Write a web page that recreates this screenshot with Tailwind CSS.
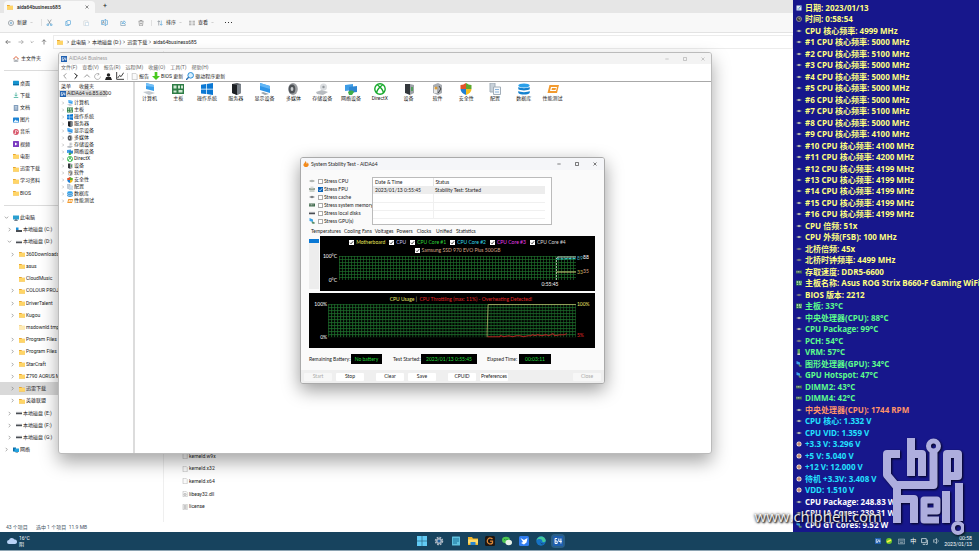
<!DOCTYPE html>
<html lang="zh-CN">
<head>
    <meta charset="UTF-8">
    <meta name="viewport" content="width=device-width, initial-scale=1.0">
    <title>AIDA64 Business</title>
    <script src="https://cdn.jsdelivr.net/npm/@tailwindcss/browser@4"></script>
</head>
<body class="h-screen overflow-hidden bg-white font-[Roboto,'Noto_Sans_CJK_SC',sans-serif] text-[5px] leading-none text-[#222] whitespace-nowrap">
<!-- Iconos -->
<svg class="hidden">
    <symbol id="folder" viewBox="0 0 12 12"><path d="M0 2h5l1 1.500h6V11H0z" fill="#e9a72e"/><path d="M0 4h12v7H0z" fill="#ffd567"/></symbol>
    <symbol id="folderlight" viewBox="0 0 12 12"><path d="M0 2h5l1 1.500h6V11H0z" fill="#f3d592"/><path d="M0 4h12v7H0z" fill="#ffebb5"/></symbol>
    <symbol id="home" viewBox="0 0 12 12"><path d="M2.500 5v6.500h2.500V8h2v3.500h2.500V5" fill="none" stroke="#8a8f98" stroke-width="1.300"/><path d="M.5 6.500L6 1l5.500 5.500" fill="none" stroke="#e0633a" stroke-width="2"/></symbol>
    <symbol id="desk" viewBox="0 0 12 12"><rect y="1.500" width="12" height="9" rx="1" fill="#1594cf"/><path d="M0 8h12v2.500H0z" fill="#0b6da5"/></symbol>
    <symbol id="down" viewBox="0 0 12 12"><path d="M6 1v7M3 5.500l3 3 3-3M1.500 11h9" fill="none" stroke="#2aa58c" stroke-width="1.400"/></symbol>
    <symbol id="doc" viewBox="0 0 12 12"><rect x="1.500" width="9" height="12" rx="1" fill="#7f9cbb"/><path d="M3.500 3h5M3.500 5.500h5M3.500 8h5" stroke="#fff"/></symbol>
    <symbol id="pic" viewBox="0 0 12 12"><rect y="1" width="12" height="10" rx="1" fill="#1c82d4"/><path d="M1 10l4-5 3 3 1.500-1.500L11 10z" fill="#e6f4ff"/></symbol>
    <symbol id="music" viewBox="0 0 12 12"><circle cx="6" cy="6" r="5.800" fill="#d8566a"/><path d="M5 9V3l4 1v2" fill="none" stroke="#fff" stroke-width="1.300"/><circle cx="4.200" cy="8.600" r="1.300" fill="#fff"/></symbol>
    <symbol id="video" viewBox="0 0 12 12"><rect width="12" height="12" rx="1" fill="#7c3cc0"/><path d="M4 3l5 3-5 3z" fill="#fff"/></symbol>
    <symbol id="pc" viewBox="0 0 12 12"><path d="M0 1h12v8H0z" fill="#2a9fd0"/><path d="M4 9h4v1.500h2v1H2v-1h2z" fill="#456"/></symbol>
    <symbol id="drive" viewBox="0 0 12 12"><path d="M0 5h12v3.500H0z" fill="#4a4e54"/><path d="M0 4.500h12" stroke="#a9adb2"/></symbol>
    <symbol id="drivec" viewBox="0 0 12 12"><path d="M0 6h12v4H0z" fill="#4a4e54"/><path d="M0 1h5v5H0z" fill="#1e90d6"/></symbol>
    <symbol id="net" viewBox="0 0 12 12"><path d="M0 1h6v8H0z" fill="#0d6ba5"/><path d="M3 3h9v7H3z" fill="#22a3e0"/><path d="M5 11h5" stroke="#456"/></symbol>
    <symbol id="file" viewBox="0 0 12 12"><path d="M2 .5h6l2.500 2.500v8.500H2z" fill="#fafafa" stroke="#aaa"/></symbol>
    <symbol id="dll" viewBox="0 0 12 12"><path d="M2 .5h6l2.500 2.500v8.500H2z" fill="#fafafa" stroke="#aaa"/><circle cx="6" cy="7" r="2" fill="none" stroke="#777"/></symbol>
    <symbol id="txt" viewBox="0 0 12 12"><path d="M2 .5h8.500v11H2z" fill="#fafafa" stroke="#aaa"/><path d="M3.500 3h5.500M3.500 5h5.500M3.500 7h5.500M3.500 9h5.500" stroke="#999"/></symbol>
    <symbol id="chev" viewBox="0 0 12 12"><path d="M4 2l4 4-4 4" fill="none" stroke="currentColor" stroke-width="1.500"/></symbol>
    <symbol id="chevd" viewBox="0 0 12 12"><path d="M2 4l4 4 4-4" fill="none" stroke="currentColor" stroke-width="1.500"/></symbol>
    <symbol id="left" viewBox="0 0 12 12"><path d="M11 6H1.500M5.500 2l-4 4 4 4" fill="none" stroke="currentColor" stroke-width="1.400"/></symbol>
    <symbol id="x" viewBox="0 0 12 12"><path d="M1.500 1.500l9 9M10.500 1.500l-9 9" stroke="currentColor" stroke-width="1.500"/></symbol>
    <symbol id="max" viewBox="0 0 12 12"><path d="M1.500 1.500h9v9h-9z" fill="none" stroke="currentColor" stroke-width="1.500"/></symbol>
    <symbol id="min" viewBox="0 0 12 12"><path d="M1 6h10" stroke="currentColor" stroke-width="1.500"/></symbol>
    <symbol id="tick" viewBox="0 0 12 12"><path d="M2.500 6.500L5 9l5-6" fill="none" stroke="currentColor" stroke-width="1.800"/></symbol>
    <symbol id="plusc" viewBox="0 0 12 12"><circle cx="6" cy="6" r="5.200" fill="none" stroke="#59656f"/><path d="M6 3.500v5M3.500 6h5" stroke="#2a7db5"/></symbol>
    <symbol id="cut" viewBox="0 0 12 12"><path d="M3 1l5 8M9 1L4 9" stroke="#68737c" fill="none"/><circle cx="3" cy="10" r="1.500" fill="none" stroke="#2a8fd0"/><circle cx="9" cy="10" r="1.500" fill="none" stroke="#2a8fd0"/></symbol>
    <symbol id="copy" viewBox="0 0 12 12"><rect x="4" y="1" width="7" height="8" rx="1" fill="none" stroke="#2a8fd0"/><path d="M4 3H1.500v8H8V9" fill="none" stroke="#2a8fd0"/></symbol>
    <symbol id="paste" viewBox="0 0 12 12"><rect x="1.500" y="1.500" width="8" height="10" rx="1" fill="none" stroke="#c4c8cc"/><rect x="5.500" y="5" width="5" height="6.500" fill="#fff" stroke="#b5cfe2"/></symbol>
    <symbol id="rename" viewBox="0 0 12 12"><path d="M6 2.500H1v7h5M9 2.500h2v7H9M7.500 0v12M6 0h3M6 12h3" fill="none" stroke="#3d93cd"/><path d="M2.500 8l1.500-4 1.500 4" fill="none" stroke="#59656f"/></symbol>
    <symbol id="share" viewBox="0 0 12 12"><path d="M5 3H1.500v8h9V8" fill="none" stroke="#59809c"/><path d="M4 8c0-3 2-4 4-4V1.500L11.500 5 8 8V6C6 6 5 6.500 4 8z" fill="none" stroke="#2a8fd0"/></symbol>
    <symbol id="trash" viewBox="0 0 12 12"><path d="M1 2.500h10M4 2V1h4v1M2 3l1 8.500h6L10 3M5 5.500v3M7 5.500v3" fill="none" stroke="#666"/></symbol>
    <symbol id="sort" viewBox="0 0 12 12"><path d="M3.500 11V1.500M1 4l2.500-2.500L6 4" fill="none" stroke="#59656f"/><path d="M8.500 1v9.500M6 8l2.500 2.500L11 8" fill="none" stroke="#2a8fd0"/></symbol>
    <symbol id="view" viewBox="0 0 12 12"><path d="M0 2.500h5M0 6h5M0 9.500h5M7 2.500h5M7 6h5M7 9.500h5" stroke="#777" stroke-width="1.300"/></symbol>

    <symbol id="logo64" viewBox="0 0 12 12"><path d="M0 0h12v12H0z" fill="#1e5fb0"/><path d="M5 3H2.500v6H5V6H2.500M7 3v3.500h3.500M9.500 3v6" fill="none" stroke="#fff" stroke-width="1.200"/></symbol>
    <symbol id="computer" viewBox="0 0 12 12"><path d="M3 0l8 2v6L3 6z" fill="#3aa0ec"/><path d="M3 0l8 2v2L3 3z" fill="#74c0f8"/><path d="M0 9l6-1 6 2-6 2z" fill="#c3c9cf"/></symbol>
    <symbol id="board" viewBox="0 0 12 12"><path d="M0 1h12v10H0z" fill="#2e7d46"/><path d="M1.500 2.500h3v3h-3zM6 2.500h2v3H6zM9 2.500h2v3H9zM1.500 7.500h3v2h-3zM6.500 7h4v2.500h-4z" fill="#cfe8d2"/></symbol>
    <symbol id="win" viewBox="0 0 12 12"><path d="M0 1.700l5-.7v4.700H0zM5.700.9L12 0v5.700H5.700zM0 6.400h5v4.700l-5-.7zM5.700 6.400H12V12l-6.300-.9z" fill="#0a78d4"/></symbol>
    <symbol id="server" viewBox="0 0 12 12"><path d="M2 1l5-1 4 1v9l-4 2-5-2z" fill="#55595f"/><path d="M2 1l5 1v10l-5-2z" fill="#1d2024"/><path d="M7 2l4-1v9l-4 2z" fill="#7c838b"/></symbol>
    <symbol id="display" viewBox="0 0 12 12"><path d="M1 0l10 3v7L1 7z" fill="#2f95e8"/><path d="M1 0l10 3v3L1 3z" fill="#62b6f6"/><path d="M4 9l6 2-4 1-4-2z" fill="#9aa3ab"/></symbol>
    <symbol id="speaker" viewBox="0 0 12 12"><ellipse cx="6" cy="6" rx="4.800" ry="6" fill="#9a9da1"/><ellipse cx="5" cy="6" rx="3.300" ry="4.500" fill="#4f5357"/><ellipse cx="5" cy="6" rx="1.400" ry="2" fill="#c9cccf"/></symbol>
    <symbol id="storage" viewBox="0 0 12 12"><path d="M0 9l6-2 6 2-5 3-6-1z" fill="#b7bbc0"/><circle cx="7.500" cy="4" r="3.500" fill="#d9dcdf"/><circle cx="7.500" cy="4" r="1.200" fill="#93989d"/></symbol>
    <symbol id="network" viewBox="0 0 12 12"><path d="M0 2l8-1v6L0 8z" fill="#3f9de6"/><path d="M4 4l8-1v6l-8 1z" fill="#2f87d2"/><path d="M3 9c2-2 5-2 6 0L7 12H4z" fill="#3fae49"/></symbol>
    <symbol id="directx" viewBox="0 0 12 12"><circle cx="6" cy="6" r="5.200" fill="#fff" stroke="#16a82b" stroke-width="1.400"/><path d="M2.500 10C3 7 5 4.500 8.500 2M9.500 10C9 7 7 4.500 3.500 2" fill="none" stroke="#16a82b" stroke-width="1.500"/></symbol>
    <symbol id="device" viewBox="0 0 12 12"><path d="M2 1h5v11l-5-2z" fill="#34383c"/><path d="M7 1l4 1v8l-4 2z" fill="#9da2a7"/><path d="M8 4h2v4H8z" fill="#54a05e"/></symbol>
    <symbol id="software" viewBox="0 0 12 12"><path d="M2 2l5-2 4 2v8l-4 2-5-2z" fill="#a9adb2"/><path d="M3 4h3v6H3z" fill="#e8e8e8"/><path d="M8 3l2 3-3 4" fill="none" stroke="#444"/><circle cx="5" cy="5" r="1.500" fill="#d79b3c"/></symbol>
    <symbol id="shield" viewBox="0 0 12 12"><path d="M6 0v6H.5V2C3 2 4 1 6 0z" fill="#e2532a"/><path d="M6 0v6h5.500V2C9 2 8 1 6 0z" fill="#5fa92e"/><path d="M.5 6H6v6C3 11 .5 9 .5 6z" fill="#1e7fd4"/><path d="M11.500 6H6v6c3-1 5.500-3 5.500-6z" fill="#f5bd1f"/></symbol>
    <symbol id="config" viewBox="0 0 12 12"><path d="M1 0h5v9H1z" fill="#c9d2da" stroke="#a3aeb9"/><path d="M4.500 4h7v7.500h-7z" fill="#f5f8fb" stroke="#a3aeb9"/><path d="M6 6.500h4M6 9h4" stroke="#8ab4dc"/></symbol>
    <symbol id="database" viewBox="0 0 12 12"><ellipse cx="6" cy="2.500" rx="5.700" ry="2" fill="#2ba0ea"/><path d="M.3 4c2 1.500 9.400 1.500 11.400 0v2.300C9.700 7.800 2.300 7.800.3 6.300zM.3 8c2 1.500 9.400 1.500 11.400 0v2c-2 2-9.400 2-11.400 0z" fill="#1481cf"/></symbol>
    <symbol id="bench" viewBox="0 0 12 12"><path d="M2.500 2H12l-2 8H.5z" fill="#f29a2e"/><path d="M4 4h6L9 8H3z" fill="#fff"/><path d="M5 5h4l-.5 2h-4z" fill="#f29a2e"/></symbol>

    <symbol id="person" viewBox="0 0 12 12"><circle cx="6" cy="3.500" r="3" fill="#222"/><path d="M0 12l2-5h8l2 5z" fill="#222"/></symbol>
    <symbol id="chart" viewBox="0 0 12 12"><path d="M1 0v11h11" fill="none" stroke="#222" stroke-width="1.300"/><path d="M2.500 9l3-4 2 2 4-6" fill="none" stroke="#222" stroke-width="1.300"/></symbol>
    <symbol id="refresh" viewBox="0 0 12 12"><path d="M8 1.500A5 5 0 1 0 11 6M6 0l3 2-3 2" fill="none" stroke="#999" stroke-width="1.200"/></symbol>
    <symbol id="green" viewBox="0 0 12 12"><path d="M4 0h4v6h4l-6 6-6-6h4z" fill="#48c81e"/></symbol>
    <symbol id="mag" viewBox="0 0 12 12"><circle cx="7" cy="5" r="4.200" fill="#d8effd" stroke="#2a8fd8" stroke-width="1.500"/><path d="M4 8l-4 4" stroke="#2a6fb0" stroke-width="2"/></symbol>
    <symbol id="flame" viewBox="0 0 12 12"><path d="M5 0c3 3 1 4 3 6 1-1 0-2 1-3 2 2 3 4 2 6-2 4-8 4-10 0C0 6 4 4 5 0z" fill="#f28a1c"/></symbol>
    <symbol id="chip" viewBox="0 0 12 12"><path d="M0 6l6-2.500L12 6 6 8.500z" fill="#8c9488"/><path d="M3 6l3-1 3 1-3 1z" fill="#eef"/></symbol>
    <symbol id="pch" viewBox="0 0 12 12"><path d="M0 6l6-2.500L12 6 6 8.500z" fill="#777c80"/></symbol>
    <symbol id="fpu" viewBox="0 0 12 12"><path d="M0 4h12v4H0zM1 9h10v2H1z" fill="#9aa79a"/><path d="M3 1h6v4H3z" fill="#d7dcd7"/></symbol>
    <symbol id="ram" viewBox="0 0 12 12"><path d="M0 3h12v6H0z" fill="#3f6b4c"/><path d="M1 4h2v3H1zM4 4h2v3H4zM7 4h2v3H7z" fill="#9cab9f"/></symbol>
    <symbol id="gpu" viewBox="0 0 12 12"><path d="M1 0l7 3v5L1 6z" fill="#39a2e8"/><path d="M5 7l6 1v4l-5-1z" fill="#5c8f68"/></symbol>
    <symbol id="vrm" viewBox="0 0 12 12"><path d="M3 0h5v12H3z" fill="#5da55f"/><path d="M3 9h5v3H3z" fill="#ccc"/></symbol>
    <symbol id="volt" viewBox="0 0 12 12"><circle cx="6" cy="6" r="5" fill="#f0e3d8"/><path d="M6 2v8M2 6h8" stroke="#a4523a" stroke-width="1.500"/></symbol>
    <symbol id="clock" viewBox="0 0 12 12"><circle cx="6" cy="6" r="5" fill="#333" stroke="#a7a7a7" stroke-width="1.500"/><path d="M6 3v3h3" stroke="#fff" fill="none"/></symbol>
    <symbol id="cal" viewBox="0 0 12 12"><path d="M1 1h10v10H1z" fill="#dfe9f3"/><path d="M6 6l5-4M3 8h4" stroke="#2878bd" stroke-width="1.500"/></symbol>
</svg>

<div class="relative flex h-full flex-col">
    <div class="flex min-h-0 flex-1">
        <!-- Explorador de archivos -->
        <section class="flex min-w-0 flex-1 flex-col overflow-hidden bg-white">
            <header class="flex h-[13px] items-end bg-[#e6e6e6] px-1">
                <div class="flex h-3 w-[91px] items-center gap-1 rounded-t-sm bg-[#f8f8f8] px-[3px] font-medium">
                    <svg class="size-[6px]"><use href="#folder"/></svg>
                    <span class="flex-1">aida64business685</span>
                    <button class="mr-[3px]" aria-label="关闭标签"><svg class="size-1"><use href="#x"/></svg></button>
                </div>
                <button class="ml-2 pb-[3px] text-[7px]">+</button>
            </header>
            <div class="flex h-5 items-center border-b border-[#e3e3e3] bg-[#f8f8f8] pl-2">
                <button class="flex w-[33px] items-center gap-[3px]"><svg class="size-[6px]"><use href="#plusc"/></svg>新建<svg class="size-[3px] text-[#888]"><use href="#chevd"/></svg></button>
                <div class="flex w-[110px] items-center gap-3 border-l border-[#e0e0e0] pl-1">
                    <button aria-label="剪切"><svg class="size-[7px]"><use href="#cut"/></svg></button>
                    <button aria-label="复制"><svg class="size-[6px]"><use href="#copy"/></svg></button>
                    <button aria-label="粘贴"><svg class="size-[6px]"><use href="#paste"/></svg></button>
                    <button aria-label="重命名"><svg class="size-[7px]"><use href="#rename"/></svg></button>
                    <button aria-label="共享"><svg class="size-[6px]"><use href="#share"/></svg></button>
                    <button aria-label="删除"><svg class="size-[6px]"><use href="#trash"/></svg></button>
                </div>
                <button class="flex w-[34px] items-center gap-[3px] border-l border-[#e0e0e0] pl-[5px]"><svg class="size-[6px]"><use href="#sort"/></svg>排序<svg class="size-[3px] text-[#888]"><use href="#chevd"/></svg></button>
                <button class="flex w-10 items-center gap-[3px] pl-1"><svg class="size-[6px]"><use href="#view"/></svg>查看<svg class="size-[3px] text-[#888]"><use href="#chevd"/></svg></button>
                <button class="flex gap-[2px]" aria-label="更多"><i class="size-px bg-[#333]"></i><i class="size-px bg-[#333]"></i><i class="size-px bg-[#333]"></i></button>
            </div>
            <div class="flex h-[18px] items-center">
                <div class="flex w-[53px] items-center justify-between pr-[6px] pl-[5px] text-[#555]">
                    <button aria-label="后退"><svg class="size-[6px]"><use href="#left"/></svg></button>
                    <button aria-label="前进"><svg class="size-[6px] rotate-180 opacity-60"><use href="#left"/></svg></button>
                    <button aria-label="最近"><svg class="size-1"><use href="#chevd"/></svg></button>
                    <button aria-label="向上"><svg class="size-[6px] rotate-90"><use href="#left"/></svg></button>
                </div>
                <nav class="flex h-[14px] flex-1 items-center gap-px border border-[#ececec] pl-[3px]">
                    <svg class="mr-[2px] size-[6px]"><use href="#folder"/></svg>
                    <svg class="size-1"><use href="#chev"/></svg><a href="#">此电脑</a>
                    <svg class="size-1"><use href="#chev"/></svg><a href="#">本地磁盘 (D:)</a>
                    <svg class="size-1"><use href="#chev"/></svg><a href="#">迅雷下载</a>
                    <svg class="size-1"><use href="#chev"/></svg><a href="#">aida64business685</a>
                </nav>
            </div>
            <div class="flex min-h-0 flex-1">
                <nav class="flex w-[164px] flex-col border-r border-[#efefef]">
                    <a href="#" class="mx-1 flex h-5 items-center gap-[2px] border-b border-[#dcdcdc] pb-1 pl-[9px]"><svg class="size-[6px]"><use href="#home"/></svg>主文件夹</a>
                    <div id="nav" class="mt-[6px] mb-[66px] flex flex-1 flex-col"></div>
                </nav>
                <div class="flex flex-1 flex-col justify-end pb-[9px] pl-[18px]">
                    <ul id="files" class="flex h-[63px] flex-col"></ul>
                </div>
            </div>
            <footer class="flex h-[10px] items-center gap-2 pl-[6px] text-[#456]"><span>43 个项目</span><span>选中 1 个项目&nbsp; 11.9 MB</span></footer>
        </section>

        <!-- Panel de sensores -->
        <aside id="sensors" class="flex w-[186px] flex-col overflow-hidden bg-[#17178c] pt-[2px] pb-[2px] pl-[3px] font-['Open_Sans','Noto_Sans_CJK_SC',sans-serif] text-[8px] font-bold"></aside>
    </div>

    <!-- Barra de tareas -->
    <footer class="grid h-[19px] grid-cols-[1fr_auto_1fr] items-center border-b border-[#8ea5b3] bg-[#17435e] text-white">
        <div class="flex items-center gap-[2px] pl-[7px]">
            <svg class="h-2 w-[10px]" viewBox="0 0 20 16"><path d="M4 14a4 4 0 0 1 0-8 6 6 0 0 1 11-1 4.500 4.500 0 0 1 1 9z" fill="#b9d3f7"/></svg>
            <div class="flex flex-col gap-px"><span>16°C</span><span>阴</span></div>
        </div>
        <div class="flex items-center gap-[3px]">
            <button class="p-[2px]" aria-label="开始"><svg class="size-[10px]" viewBox="0 0 20 20"><path d="M0 0h9.500v9.500H0zM10.500 0H20v9.500h-9.500zM0 10.500h9.500V20H0zM10.500 10.500H20V20h-9.500z" fill="#62cbf5"/></svg></button>
            <button class="p-[2px]" aria-label="设置"><svg class="size-[10px]" viewBox="0 0 20 20"><circle cx="10" cy="10" r="7" fill="none" stroke="#b4bec8" stroke-width="3" stroke-dasharray="3.500 2"/><circle cx="10" cy="10" r="6" fill="#a5b1bd"/><circle cx="10" cy="10" r="3" fill="#205f9c"/></svg></button>
            <button class="p-[2px]" aria-label="记事本"><svg class="size-[10px]" viewBox="0 0 20 20"><rect x="2" y="1" width="16" height="18" rx="1" fill="#5fc0dd"/><path d="M4 6h12M4 10h12M4 14h8" stroke="#17719a" stroke-width="2"/></svg></button>
            <button class="p-[2px]" aria-label="文件资源管理器"><svg class="size-[10px]" viewBox="0 0 20 20"><path d="M0 2h8l2 3h10v13H0z" fill="#f0b429"/><path d="M0 7h20v8H0z" fill="#ffdc6b"/><path d="M5 12h10v6H5z" fill="#2a86d2"/></svg></button>
            <button class="p-[2px]" aria-label="技嘉"><svg class="size-[10px]" viewBox="0 0 20 20"><rect width="20" height="20" rx="3" fill="#1c1714"/><path d="M15 6a6 6 0 1 0 0 8v-4h-5" fill="none" stroke="#e18a37" stroke-width="2.500"/></svg></button>
            <button class="p-[2px]" aria-label="微信"><svg class="size-[10px]" viewBox="0 0 20 20"><ellipse cx="8" cy="8" rx="8" ry="6.500" fill="#4cc552"/><ellipse cx="13.500" cy="13" rx="6.500" ry="5.500" fill="#e8f2ea"/><circle cx="5.500" cy="7" r="1.200" fill="#173"/><circle cx="10" cy="7" r="1.200" fill="#173"/></svg></button>
            <button class="p-[2px]" aria-label="迅雷"><svg class="size-[10px]" viewBox="0 0 20 20"><rect width="20" height="20" rx="3" fill="#2f7df0"/><path d="M3 4l7 4 7-4-2 9-5 4-6-3 4-2z" fill="#fff"/></svg></button>
            <button class="p-[2px]" aria-label="Edge"><svg class="size-[10px]" viewBox="0 0 20 20"><circle cx="10" cy="10" r="9.500" fill="#1673c5"/><path d="M1 9C3-2 18-2 19.500 9c0 4-6 4-7 2 1-5-7-7-11.500-2z" fill="#43c99b"/><path d="M9 11c0 4 4 5 8 4-2 3-9 2-8-4z" fill="#17435e"/></svg></button>
            <button class="rounded-sm bg-[#2a5f86] p-[2px]" aria-label="AIDA64"><svg class="size-[10px]"><use href="#logo64"/></svg></button>
        </div>
        <div class="flex items-center justify-end gap-[5px] pr-[7px]">
            <svg class="size-[6px]"><use href="#logo64"/></svg>
            <svg class="size-[6px]" viewBox="0 0 12 12"><circle cx="6" cy="6" r="6" fill="#6cc52c"/><path d="M2 8l8-4" stroke="#fff04a" stroke-width="3"/></svg>
            <svg class="ml-px size-[7px]" viewBox="0 0 12 12"><path d="M.5 2h11v8H.5zM2 5h8M3 8h6" fill="none" stroke="#d0dae0"/></svg>
            <span class="text-[6px]">中</span>
            <svg class="size-[7px]" viewBox="0 0 12 12"><path d="M1 1h8v7H1zM3 11h4M11 3v8H8" fill="none" stroke="#e0e8ec" stroke-width="1.300"/></svg>
            <svg class="size-[6px]" viewBox="0 0 12 12"><path d="M0 4h3l4-3v10L3 8H0z" fill="none" stroke="#e0e8ec" stroke-width="1.300"/><path d="M9 3c2 2 2 4 0 6" fill="none" stroke="#e0e8ec"/></svg>
            <div class="flex flex-col items-end gap-px font-[Lato,sans-serif]"><span>00:58</span><span>2023/01/13</span></div>
        </div>
    </footer>

    <!-- Ventana AIDA64 -->
    <section class="absolute top-[52px] left-[58px] flex h-[402px] w-[654px] flex-col overflow-hidden rounded-[3px] border border-[#bbb] bg-white shadow-[0_8px_18px_rgba(0,0,0,0.35)]">
        <header class="flex h-[11px] items-center bg-[#f3f3f3] px-[2px] text-[#999]">
            <svg class="mr-[2px] size-[6px]"><use href="#logo64"/></svg>
            <h1 class="flex-1 font-[Lato,sans-serif]">AIDA64 Business</h1>
            <div class="flex gap-[14px] pr-1">
                <button aria-label="最小化"><svg class="size-1"><use href="#min"/></svg></button>
                <button aria-label="最大化"><svg class="size-1"><use href="#max"/></svg></button>
                <button aria-label="关闭"><svg class="size-1"><use href="#x"/></svg></button>
            </div>
        </header>
        <nav class="flex h-[7px] items-center gap-[5px] pl-[2px] text-[#666]">
            <button>文件(F)</button><button>查看(V)</button><button>报告(R)</button><button>远程(M)</button><button>收藏(O)</button><button>工具(T)</button><button>帮助(H)</button>
        </nav>
        <div class="flex h-[11px] items-center gap-[3px] border-b border-[#a8a8a8] pl-[2px]">
            <button aria-label="后退"><svg class="size-2 rotate-180 text-[#999]"><use href="#chev"/></svg></button>
            <button aria-label="前进"><svg class="size-2 text-black"><use href="#chev"/></svg></button>
            <button aria-label="向上"><svg class="size-2 rotate-180 text-[#999]"><use href="#chevd"/></svg></button>
            <button aria-label="刷新"><svg class="size-[7px]"><use href="#refresh"/></svg></button>
            <button class="ml-px" aria-label="用户"><svg class="size-[7px]"><use href="#person"/></svg></button>
            <button class="ml-px" aria-label="图表"><svg class="size-2"><use href="#chart"/></svg></button>
            <button class="flex items-center gap-px border-l border-[#ddd] pl-[3px]"><svg class="size-[7px]"><use href="#file"/></svg>报告</button>
            <button class="flex items-center gap-px"><svg class="size-2"><use href="#green"/></svg>BIOS 更新</button>
            <button class="flex items-center gap-px"><svg class="size-2"><use href="#mag"/></svg>驱动程序更新</button>
        </div>
        <div class="flex min-h-0 flex-1">
            <div class="w-[76px] border-r-2 border-[#dcdcdc]">
                <div class="flex h-2 items-center gap-2 pl-[2px] text-[#222]"><span>菜单</span><span>收藏夹</span></div>
                <div class="mb-[2px] flex h-[7px] w-[48px] items-center gap-px bg-[#d9d9d9] pl-px font-[Lato,sans-serif]"><svg class="size-[6px] shrink-0"><use href="#logo64"/></svg>AIDA64 v6.85.6300</div>
                <ul id="tree"></ul>
            </div>
            <div class="min-w-0 flex-1">
                <div id="tools" class="grid w-[432px] grid-cols-15 pt-px"></div>
            </div>
        </div>
    </section>

    <!-- System Stability Test -->
    <section class="absolute top-[157px] left-[300px] flex w-[305px] flex-col overflow-hidden rounded-[3px] border border-[#aaa] bg-[#fafafa] font-[Lato,sans-serif] text-[#222] shadow-[0_6px_18px_rgba(0,0,0,0.4)]">
        <header class="flex h-3 items-center bg-[#f5f6f9] px-[2px]">
            <svg class="mr-[2px] size-[6px]"><use href="#flame"/></svg>
            <h2 class="flex-1">System Stability Test - AIDA64</h2>
            <div class="flex gap-[14px] pr-[5px] text-black">
                <button aria-label="最小化"><svg class="size-1"><use href="#min"/></svg></button>
                <button aria-label="最大化"><svg class="size-1"><use href="#max"/></svg></button>
                <button aria-label="关闭"><svg class="size-1"><use href="#x"/></svg></button>
            </div>
        </header>
        <div class="flex flex-col pt-[7px] pr-[9px] pl-2">
            <div class="flex">
                <div id="stress" class="w-[63px] shrink-0"></div>
                <div class="h-[48px] w-[180px] border border-[#bbb] bg-white">
                    <table class="w-[172px] table-fixed text-left">
                        <thead><tr class="h-2"><th class="w-[60px] border-r border-[#e5e5e5] pl-[2px] font-normal">Date &amp; Time</th><th class="pl-[2px] font-normal">Status</th></tr></thead>
                        <tbody>
                            <tr class="h-2 bg-[#ededed]"><td class="pl-[2px]">2023/01/13 0:55:45</td><td class="pl-[2px]">Stability Test: Started</td></tr>
                            <tr class="h-2 border-b border-[#f0f0f0]"><td class="border-r border-[#f0f0f0]"></td><td></td></tr>
                            <tr class="h-2 border-b border-[#f0f0f0]"><td class="border-r border-[#f0f0f0]"></td><td></td></tr>
                            <tr class="h-2 border-b border-[#f0f0f0]"><td class="border-r border-[#f0f0f0]"></td><td></td></tr>
                        </tbody>
                    </table>
                </div>
            </div>
            <nav class="mt-[2px] mb-px flex h-2 items-center gap-[3px] pl-[2px]">
                <button>Temperatures</button><button>Cooling Fans</button><button>Voltages</button><button>Powers</button><button class="ml-px">Clocks</button><button class="ml-[2px]">Unified</button><button class="ml-px">Statistics</button>
            </nav>
            <div class="flex">
                <div class="mt-[3px] mb-[2px] w-[10px] bg-[#ededed]"><div class="h-1 bg-[#0a78d4]"></div></div>
                <div class="ml-px min-w-0 flex-1 bg-black pt-[3px]">
                    <div class="flex h-[6px] items-center justify-center gap-1" id="legend"></div>
                    <div class="mt-[2px] flex h-[6px] items-center justify-center" id="legend2"></div>
                    <svg class="block w-full" viewBox="0 0 275 38" font-size="5">
                        <defs><pattern id="g1" width="3" height="3" patternUnits="userSpaceOnUse" x="19" y="3"><path d="M.5 0v3M0 .5h3" stroke="#1c6b2a" stroke-width=".7"/></pattern></defs>
                        <rect x="19" y="3" width="237" height="24" fill="url(#g1)"/>
                        <path d="M236.500 27V5" stroke="#cfe0c8" stroke-dasharray="2 1" stroke-width=".8"/>
                        <path d="M236.500 6l1-2 18.500 0" fill="none" stroke="#e0e6e6" stroke-width=".8"/>
                        <path d="M236.500 6l19.500-.5" fill="none" stroke="#35c8c8" stroke-width="1.200" stroke-dasharray="3 1"/>
                        <path d="M236.500 19H256" stroke="#cfc878" stroke-width="1"/>
                        <text x="17" y="5" text-anchor="end" fill="#fff">100°C</text>
                        <text x="17" y="29" text-anchor="end" fill="#fff">0°C</text>
                        <text x="257" y="7" fill="#4aa8b8">89</text><text x="263" y="6" fill="#fff">88</text>
                        <text x="257" y="21" fill="#c8b858">33</text><text x="263" y="20" fill="#d9a88a">35</text>
                        <text x="230" y="33" text-anchor="middle" fill="#fff">0:55:45</text>
                    </svg>
                </div>
            </div>
            <div class="mt-[2px] bg-black">
                <svg class="block w-full" viewBox="0 0 285 55" font-size="5">
                    <defs><pattern id="g2" width="3" height="3" patternUnits="userSpaceOnUse" x="19" y="11"><path d="M.5 0v3M0 .5h3" stroke="#1c6b2a" stroke-width=".7"/></pattern></defs>
                    <text x="105" y="8" text-anchor="end" fill="#e8e86a">CPU Usage</text>
                    <text x="107" y="8" text-anchor="middle" fill="#ccc">|</text>
                    <text x="110" y="8" fill="#e02828">CPU Throttling (max: 11%) - Overheating Detected!</text>
                    <rect x="19" y="11" width="247" height="33" fill="url(#g2)"/>
                    <path d="M177.500 44v-5l1-27.500H266" fill="none" stroke="#b5b56a" stroke-width=".8"/>
                    <path d="M178 43.500h12l1-1 3 1 5-1 4 1 4-1 3 0 4 1 4-1 3 0 2-1 2 1 3-1 4 1 4-1 3 1 4-2 2 2 5-1 4 0 3-1" fill="none" stroke="#b02222" stroke-width="1"/>
                    <text x="18" y="13" text-anchor="end" fill="#fff">100%</text>
                    <text x="18" y="46" text-anchor="end" fill="#fff">0%</text>
                    <text x="267" y="13" fill="#e8e86a">100%</text>
                    <text x="267" y="44" fill="#e02828">5%</text>
                </svg>
            </div>
            <div class="my-[6px] flex h-[10px] items-center">
                <span class="w-[42px]">Remaining Battery:</span><output class="flex h-full w-[31px] items-center justify-center bg-black text-[#22d83c]">No battery</output>
                <span class="ml-[11px] w-[28px]">Test Started:</span><output class="flex h-full w-[56px] items-center justify-center bg-black text-[#22d83c]">2023/01/13 0:55:45</output>
                <span class="ml-[10px] w-8">Elapsed Time:</span><output class="flex h-full w-8 items-center justify-center bg-black text-[#22d83c]">00:03:11</output>
            </div>
        </div>
        <footer class="flex h-[13px] items-center gap-1 bg-[#efefef] px-[3px]">
            <button disabled class="h-2 w-7 rounded-[1px] bg-[#f7f7f7] text-[#aaa]">Start</button>
            <button class="mr-2 h-2 w-7 rounded-[1px] bg-white">Stop</button>
            <button class="h-2 w-7 rounded-[1px] bg-white">Clear</button>
            <button class="mr-2 h-2 w-7 rounded-[1px] bg-white">Save</button>
            <button class="h-2 w-7 rounded-[1px] bg-white">CPUID</button>
            <button class="h-2 w-7 rounded-[1px] bg-white">Preferences</button>
            <button disabled class="ml-auto h-2 w-7 rounded-[1px] bg-[#f7f7f7] text-[#aaa]">Close</button>
        </footer>
    </section>

    <!-- Marca de agua -->
    <div class="pointer-events-none absolute right-[97px] bottom-[27px] font-['Open_Sans',sans-serif] text-[15px] text-white/90 [text-shadow:1px_1px_2px_#000,0_0_3px_#000]">www.chiphell.com</div>
    <svg class="pointer-events-none absolute right-[15px] bottom-[15px] h-[99px] w-[83px] drop-shadow-[1px_1px_1px_rgba(0,0,0,0.8)]" viewBox="0 0 83 99" fill="none" stroke="#aeaede" stroke-width="8" stroke-linejoin="round">
        <path d="M19 17H6v21l10 12v36"/>
        <path d="M13 48h39.500V14"/>
        <path d="M30 1v38M30 17h11v22"/>
        <circle cx="52.500" cy="9" r="5" stroke-width="5"/>
        <path d="M66 48V17h11v22H66"/>
        <path d="M16 62h17v24"/>
        <path d="M43 74h13V63H43v20h15" stroke-width="7"/>
        <path d="M65 54v32"/>
        <path d="M78 46v38"/>
        <circle cx="77" cy="91" r="5" stroke-width="4"/>
    </svg>
</div>

<script>
const fill = (id, rows, html) => { document.getElementById(id).innerHTML = rows.map(html).join(''); };

// [icono, texto, nivel, flecha, seleccionado]
const nav = [
    ['desk', '桌面'], ['down', '下载'], ['doc', '文档'], ['pic', '图片'], ['music', '音乐'], ['video', '视频'],
    ['folder', '电影'], ['folder', '迅雷下载'], ['folder', '学习资料'], ['folder', 'BIOS'], null,
    ['pc', '此电脑', 0, 'chevd'], ['drivec', '本地磁盘 (C:)', 1, 'chev'], ['drive', '本地磁盘 (D:)', 1, 'chevd'],
    ['folder', '360Downloads', 2, 'chev'], ['folder', 'asus', 2], ['folder', 'CloudMusic', 2],
    ['folder', 'COLOUR PROJECT', 2, 'chev'], ['folder', 'DriverTalent', 2, 'chev'], ['folder', 'Kugou', 2, 'chev'],
    ['folderlight', 'msdownld.tmp', 2], ['folder', 'Program Files', 2, 'chev'], ['folder', 'Program Files', 2, 'chev'],
    ['folder', 'StarCraft', 2, 'chev'], ['folder', 'Z790 AORUS M', 2, 'chev'], ['folder', '迅雷下载', 2, 'chev', true],
    ['folder', '英雄联盟', 2, 'chev'], ['drive', '本地磁盘 (E:)', 1, 'chev'], ['drive', '本地磁盘 (F:)', 1, 'chev'],
    ['drive', '本地磁盘 (G:)', 1, 'chev'], ['net', '网络', 0, 'chev']
];
const indent = ['pl-1', 'pl-[7px]', 'pl-[10px]'];
fill('nav', nav, r => r
    ? `<a href="#" class="flex flex-1 items-center gap-px ${indent[r[2] || 0]} ${r[4] ? 'bg-[#d9d9d9]' : ''}"><svg class="mr-[3px] size-[5px] text-[#777]">${r[3] ? `<use href="#${r[3]}"/>` : ''}</svg><svg class="size-[6px]"><use href="#${r[0]}"/></svg>${r[1]}</a>`
    : '<div class="flex flex-1 items-center px-1"><div class="w-full border-t border-[#dcdcdc]"></div></div>');

fill('files', [['file', 'kerneld.w9x'], ['file', 'kerneld.x32'], ['file', 'kerneld.x64'], ['dll', 'libeay32.dll'], ['txt', 'license']],
    r => `<li class="flex flex-1 items-center gap-px"><svg class="size-[6px]"><use href="#${r[0]}"/></svg>${r[1]}</li>`);

const items = [
    ['computer', '计算机'], ['board', '主板'], ['win', '操作系统'], ['server', '服务器'], ['display', '显示设备'],
    ['speaker', '多媒体'], ['storage', '存储设备'], ['network', '网络设备'], ['directx', 'DirectX'], ['device', '设备'],
    ['software', '软件'], ['shield', '安全性'], ['config', '配置'], ['database', '数据库'], ['bench', '性能测试']
];
fill('tree', items, r => `<li class="flex h-[7px] items-center gap-px pl-[2px]"><svg class="mr-px size-1 text-[#888]"><use href="#chev"/></svg><svg class="size-[6px]"><use href="#${r[0]}"/></svg>${r[1]}</li>`);
fill('tools', items, r => `<button class="flex flex-col items-center gap-px"><svg class="size-3"><use href="#${r[0]}"/></svg>${r[1]}</button>`);

const box = (cls, on) => `<span class="grid size-[5px] shrink-0"><input type="checkbox" class="peer col-start-1 row-start-1 size-[5px] appearance-none ${cls}" ${on ? 'checked' : ''}><svg class="pointer-events-none invisible col-start-1 row-start-1 size-[5px] peer-checked:visible"><use href="#tick"/></svg></span>`;
fill('stress', [['chip', 'Stress CPU'], ['fpu', 'Stress FPU', true], ['pch', 'Stress cache'], ['ram', 'Stress system memory'], ['drive', 'Stress local disks'], ['gpu', 'Stress GPU(s)']],
    r => `<label class="flex h-2 items-center gap-px"><svg class="mr-[2px] size-[6px] shrink-0"><use href="#${r[0]}"/></svg><span class="text-white">${box('border border-[#aaa] bg-white checked:border-[#0a63b8] checked:bg-[#0a63b8]', r[2])}</span>${r[1]}</label>`);

const legend = r => `<label class="flex items-center gap-[2px] ${r[1]}"><span class="text-black">${box('bg-white', true)}</span>${r[0]}</label>`;
fill('legend', [['Motherboard', 'text-[#e8e85a]'], ['CPU', 'text-[#c5c5f0]'], ['CPU Core #1', 'text-[#2fd83c]'], ['CPU Core #2', 'text-[#35dce8]'], ['CPU Core #3', 'text-[#e83ce8]'], ['CPU Core #4', 'text-[#d5d5d5]']], legend);
fill('legend2', [['Samsung SSD 970 EVO Plus 500GB', 'text-[#d9a88a]']], legend);

const Y = 'text-[#ffff80]', G = 'text-[#5cfc8c]', O = 'text-[#ff9468]', C = 'text-[#22e2ff]', W = 'text-white';
const mhz = [5000, 5100, 5000, 5000, 5000, 5000, 5100, 5000, 4100, 4100, 4200, 4199, 4199, 4199, 4199, 4199];
const sensors = [
    ['cal', Y, '日期: 2023/01/13'], ['clock', Y, '时间: 0:58:54'], ['chip', Y, 'CPU 核心频率: 4999 MHz'],
    ...mhz.map((v, i) => ['chip', Y, `#${i + 1} CPU 核心频率: ${v} MHz`]),
    ['chip', Y, 'CPU 倍频: 51x'], ['chip', Y, 'CPU 外频(FSB): 100 MHz'], ['pch', Y, '北桥倍频: 45x'], ['pch', Y, '北桥时钟频率: 4499 MHz'],
    ['ram', Y, '存取速度: DDR5-6600'], ['board', Y, '主板名称: Asus ROG Strix B660-F Gaming WiFi'], ['pch', Y, 'BIOS 版本: 2212'],
    ['board', G, '主板: 33°C'], ['chip', G, '中央处理器(CPU): 88°C'], ['chip', G, 'CPU Package: 99°C'], ['pch', G, 'PCH: 54°C'], ['vrm', G, 'VRM: 57°C'],
    ['gpu', G, '图形处理器(GPU): 34°C'], ['gpu', G, 'GPU Hotspot: 47°C'], ['ram', G, 'DIMM2: 43°C'], ['ram', G, 'DIMM4: 42°C'],
    ['chip', O, '中央处理器(CPU): 1744 RPM'],
    ['chip', C, 'CPU 核心: 1.332 V'], ['chip', C, 'CPU VID: 1.359 V'], ['volt', C, '+3.3 V: 3.296 V'], ['volt', C, '+5 V: 5.040 V'],
    ['volt', C, '+12 V: 12.000 V'], ['volt', C, '待机 +3.3V: 3.408 V'], ['volt', C, 'VDD: 1.510 V'],
    ['chip', W, 'CPU Package: 248.83 W'], ['chip', W, 'CPU IA Cores: 239.31 W'], ['gpu', W, 'CPU GT Cores: 9.52 W']
];
fill('sensors', sensors, r => `<div class="flex flex-1 items-center gap-[3px] ${r[1]}"><svg class="size-[6px] shrink-0"><use href="#${r[0]}"/></svg>${r[2]}</div>`);
</script>
</body>
</html>
